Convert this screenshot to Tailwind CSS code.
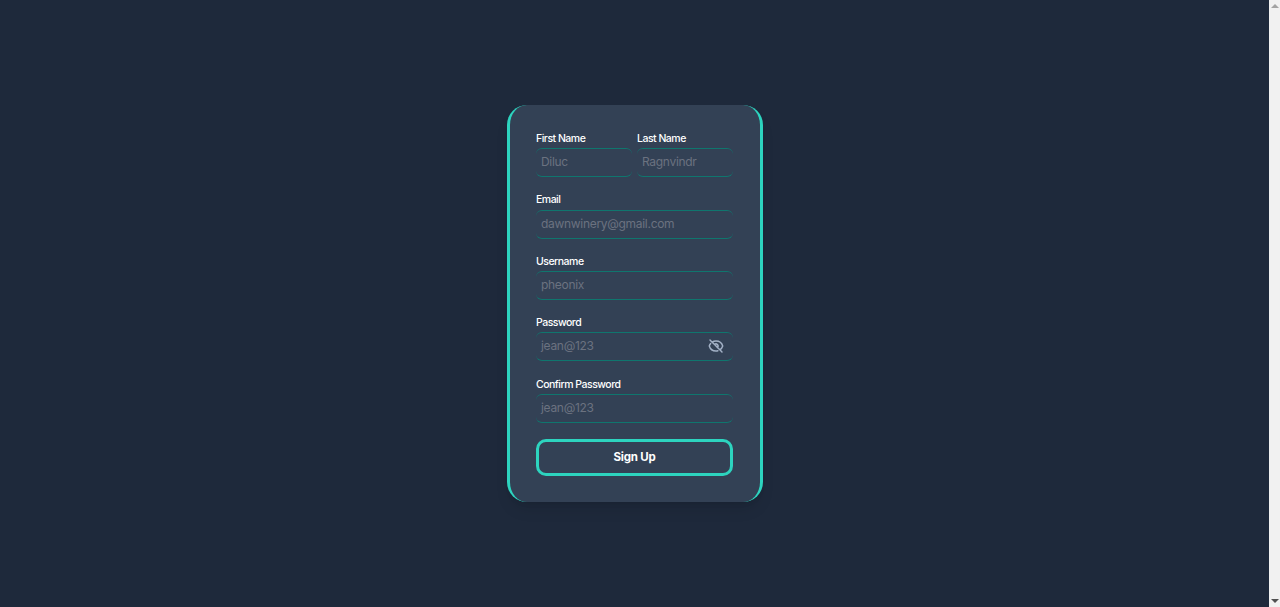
<!DOCTYPE html>
<html lang="en">
<head>
    <meta charset="UTF-8">
    <meta name="viewport" content="width=device-width, initial-scale=1.0">
    <title>Sign Up</title>
    <script src="https://cdn.jsdelivr.net/npm/@tailwindcss/browser@4"></script>
</head>
<body class="bg-[#1e293b] font-['Inter',sans-serif] overflow-hidden">
    <div class="flex h-[607px]">
        <!-- page -->
        <main class="flex-1 flex justify-center pt-[105px]">
            <form class="w-[256px] h-[397px] bg-[#334155] rounded-[20px] border-x-[3px] border-[#2dd4bf] shadow-lg px-[26.5px] pt-[26px]">
                <!-- name row -->
                <div class="flex gap-[5px] mb-[16px]">
                    <div class="w-[96px]">
                        <label class="block h-[17px] text-[10.5px] tracking-[-0.5px] leading-[16px] font-medium text-white">First Name</label>
                        <div class="h-[29px] px-[5px] pb-[2px] flex items-center border-y border-[#0f766e] rounded-[6px] text-[12px] tracking-[-0.3px] text-[#6b7280]">Diluc</div>
                    </div>
                    <div class="w-[96px]">
                        <label class="block h-[17px] text-[10.5px] tracking-[-0.5px] leading-[16px] font-medium text-white">Last Name</label>
                        <div class="h-[29px] px-[5px] pb-[2px] flex items-center border-y border-[#0f766e] rounded-[6px] text-[12px] tracking-[-0.3px] text-[#6b7280]">Ragnvindr</div>
                    </div>
                </div>
                <div class="mb-[15px]">
                    <label class="block h-[17px] text-[10.5px] tracking-[-0.5px] leading-[14px] font-medium text-white">Email</label>
                    <div class="h-[29px] px-[5px] pb-[2px] flex items-center border-y border-[#0f766e] rounded-[6px] text-[12px] tracking-[-0.3px] text-[#6b7280]">dawnwinery@gmail.com</div>
                </div>
                <div class="mb-[15px]">
                    <label class="block h-[17px] text-[10.5px] tracking-[-0.5px] leading-[15px] font-medium text-white">Username</label>
                    <div class="h-[29px] px-[5px] pb-[2px] flex items-center border-y border-[#0f766e] rounded-[6px] text-[12px] tracking-[-0.3px] text-[#6b7280]">pheonix</div>
                </div>
                <div class="mb-[16px]">
                    <label class="block h-[17px] text-[10.5px] tracking-[-0.5px] leading-[15px] font-medium text-white">Password</label>
                    <div class="h-[29px] pl-[5px] pr-[9.5px] pb-[1px] flex items-center justify-between border-y border-[#0f766e] rounded-[6px] text-[12px] tracking-[-0.3px] text-[#6b7280]">
                        <span>jean@123</span>
                        <svg xmlns="http://www.w3.org/2000/svg" class="w-[16px] h-[16px] text-[#a3b1c6]" fill="none" viewBox="0 0 24 24" stroke="currentColor" stroke-width="2.2" stroke-linecap="round" stroke-linejoin="round"><path d="M3.98 8.223A10.477 10.477 0 0 0 1.934 12C3.226 16.338 7.244 19.5 12 19.5c.993 0 1.953-.138 2.863-.395M6.228 6.228A10.45 10.45 0 0 1 12 4.5c4.756 0 8.773 3.162 10.065 7.498a10.522 10.522 0 0 1-4.293 5.774M6.228 6.228 3 3m3.228 3.228 3.65 3.65m7.894 7.894L21 21m-3.228-3.228-3.65-3.65m0 0a3 3 0 1 0-4.243-4.243m4.242 4.242L9.88 9.88"/></svg>
                    </div>
                </div>
                <div class="mb-[16px]">
                    <label class="block h-[17px] text-[10.5px] tracking-[-0.5px] leading-[15px] font-medium text-white">Confirm Password</label>
                    <div class="h-[29px] px-[5px] pb-[2px] flex items-center border-y border-[#0f766e] rounded-[6px] text-[12px] tracking-[-0.3px] text-[#6b7280]">jean@123</div>
                </div>
                <button type="button" class="w-full h-[37px] rounded-[10px] border-[3px] border-[#2dd4bf] text-[11.5px] tracking-[-0.2px] font-bold text-white">Sign Up</button>
            </form>
        </main>
        <!-- scrollbar -->
        <aside class="w-[11px] bg-[#f1f1f1] flex flex-col justify-between items-center py-[4px]">
            <div class="w-0 h-0 border-x-[4px] border-x-transparent border-b-[4px] border-b-[#a3a3a3]"></div>
            <div class="w-0 h-0 border-x-[4px] border-x-transparent border-t-[4px] border-t-[#505050]"></div>
        </aside>
    </div>
</body>
</html>
